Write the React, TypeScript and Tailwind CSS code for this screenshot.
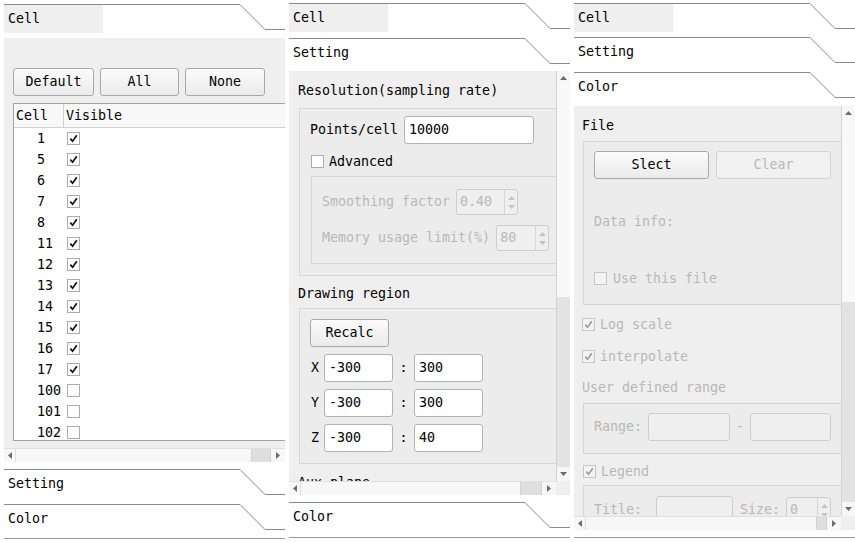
import React from "react";

const font = "font-['DejaVu_Sans_Mono',monospace] text-[13.3px] leading-[16px]";

const Tab = ({ label, active, h }: { label: string; active?: boolean; h: string }) => (
  <div className={`relative shrink-0 ${h}`}>
    <svg className="absolute left-0 top-0" width="281" height="30">
      <polyline points="0,0.5 236,0.5 261,25.5 281,25.5" fill="none" stroke="#8a8a8a" strokeWidth="1" />
    </svg>
    <div className={`relative mt-[1px] flex h-[28px] w-[99px] items-center pl-[4px] ${active ? "bg-[#efefef]" : ""}`}>
      {label}
    </div>
  </div>
);

const Check = ({ checked, disabled }: { checked?: boolean; disabled?: boolean }) => (
  <span
    className={`flex h-[13px] w-[13px] shrink-0 items-center justify-center border ${
      disabled ? "border-[#c6c6c6] bg-[#f3f3f3]" : "border-[#acacac] bg-white"
    }`}
  >
    {checked && (
      <svg width="9" height="9" viewBox="0 0 9 9">
        <path d="M1.3 4.6 L3.6 7.2 L7.8 1.2" fill="none" stroke={disabled ? "#9c9c9c" : "#111"} strokeWidth="1.7" />
      </svg>
    )}
  </span>
);

const Btn = ({ children, w, disabled }: { children: React.ReactNode; w: string; disabled?: boolean }) => (
  <div
    className={`flex h-[28px] shrink-0 items-center justify-center rounded-[3px] border ${w} ${
      disabled
        ? "border-[#d2d2d2] bg-[#f1f1f1] text-[#b8b8b8]"
        : "border-[#a9a9a9] bg-gradient-to-b from-[#fbfbfb] to-[#ebebeb] text-black"
    }`}
  >
    {children}
  </div>
);

const Field = ({ children, w, disabled }: { children?: React.ReactNode; w: string; disabled?: boolean }) => (
  <div
    className={`flex h-[28px] shrink-0 items-center rounded-[3px] border pl-[4px] ${w} ${
      disabled ? "border-[#cdcdcd] bg-[#efefef] text-[#b8b8b8]" : "border-[#b3b3b3] bg-white text-black"
    }`}
  >
    {children}
  </div>
);

const Spin = ({ value, w }: { value: string; w: string }) => (
  <div className={`flex h-[26px] shrink-0 rounded-[3px] border border-[#cdcdcd] bg-[#efefef] text-[#b8b8b8] ${w}`}>
    <span className="flex flex-1 items-center pl-[3px]">{value}</span>
    <span className="flex w-[13px] flex-col items-center justify-center gap-[5px] border-l border-[#d6d6d6]">
      <svg width="7" height="4"><path d="M0 4 L3.5 0 L7 4Z" fill="#c4c4c4" /></svg>
      <svg width="7" height="4"><path d="M0 0 L3.5 4 L7 0Z" fill="#c4c4c4" /></svg>
    </span>
  </div>
);

const HScroll = ({ thumb }: { thumb: string }) => (
  <div className="flex h-[14px] flex-1 border-t border-[#e0e0e0] bg-[#f7f7f7]">
    <div className="flex w-[12px] items-center justify-center border-r border-[#dedede]">
      <svg width="4" height="7"><path d="M4 0 L0 3.5 L4 7Z" fill="#6c6c6c" /></svg>
    </div>
    <div className="flex flex-1 justify-end">
      <div className={`border-x border-[#d2d2d2] bg-[#dfdfdf] ${thumb}`} />
    </div>
    <div className="flex w-[14px] items-center justify-center">
      <svg width="4" height="7"><path d="M0 0 L4 3.5 L0 7Z" fill="#6c6c6c" /></svg>
    </div>
  </div>
);

const VScroll = ({ thumb }: { thumb: string }) => (
  <div className="flex w-[14px] shrink-0 flex-col border-l border-[#d4d4d4]">
    <div className="flex h-[14px] items-center justify-center bg-[#f7f7f7]">
      <svg width="7" height="4"><path d="M0 4 L3.5 0 L7 4Z" fill="#6c6c6c" /></svg>
    </div>
    <div className={`bg-[#f9f9f9] ${thumb}`} />
    <div className="flex-1 bg-[#e3e3e3]" />
    <div className="flex h-[14px] items-center justify-center bg-[#f7f7f7]">
      <svg width="7" height="4"><path d="M0 0 L3.5 4 L7 0Z" fill="#6c6c6c" /></svg>
    </div>
  </div>
);

const Group = ({ children, cls }: { children: React.ReactNode; cls: string }) => (
  <div className={`shrink-0 border border-[#d5d5d5] bg-[#ececec] ${cls}`}>{children}</div>
);

const cells = [1, 5, 6, 7, 8, 11, 12, 13, 14, 15, 16, 17, 100, 101, 102];

const CellPanel = () => (
  <div className="flex h-[424px] flex-col bg-[#efefef]">
    <div className="h-[410px] overflow-hidden pl-[9px] pt-[30px]">
      <div className="flex gap-[6px]">
        <Btn w="w-[81px] h-[27px]">Default</Btn>
        <Btn w="w-[79px] h-[27px]">All</Btn>
        <Btn w="w-[80px] h-[27px]">None</Btn>
      </div>
      <div className="mt-[7px] h-[338px] w-[290px] overflow-hidden border border-r-0 border-[#a3a3a3] bg-white">
        <div className="flex h-[24px] border-b border-[#d0d0d0] bg-[#f8f8f8]">
          <div className="flex w-[50px] items-center border-r border-[#d0d0d0] pl-[2px]">Cell</div>
          <div className="flex items-center pl-[2px]">Visible</div>
        </div>
        {cells.map((c, i) => (
          <div key={c} className="flex h-[21px] items-center">
            <div className="w-[50px] pl-[23px]">{c}</div>
            <div className="pl-[3px]">
              <Check checked={i < 12} />
            </div>
          </div>
        ))}
      </div>
    </div>
    <HScroll thumb="w-[20px]" />
  </div>
);

const SettingPanel = () => (
  <div className="flex h-[424px] flex-col bg-[#efefef]">
    <div className="flex h-[410px]">
      <div className="flex-1 overflow-hidden pl-[9px] pt-[12px]">
        <div>Resolution(sampling rate)</div>
        <Group cls="ml-[1px] mt-[9px] h-[168px] w-[270px] pl-[10px] pt-[7px]">
          <div className="flex items-center gap-[6px]">
            <span>Points/cell</span>
            <Field w="w-[130px]">10000</Field>
          </div>
          <div className="mt-[11px] flex h-[13px] items-center gap-[5px] pl-[1px]">
            <Check />
            <span>Advanced</span>
          </div>
          <Group cls="ml-[1px] mt-[8px] h-[88px] w-[260px] pl-[10px] pt-[12px] text-[#b8b8b8]">
            <div className="flex items-center gap-[6px]">
              <span>Smoothing factor</span>
              <Spin value="0.40" w="w-[62px]" />
            </div>
            <div className="mt-[10px] flex items-center gap-[6px]">
              <span>Memory usage limit(%)</span>
              <Spin value="80" w="w-[53px]" />
            </div>
          </Group>
        </Group>
        <div className="mt-[10px]">Drawing region</div>
        <Group cls="ml-[1px] mt-[6px] h-[156px] w-[270px] pl-[10px] pt-[10px]">
          <Btn w="w-[79px]">Recalc</Btn>
          {[
            ["X", "300"],
            ["Y", "300"],
            ["Z", "40"],
          ].map(([axis, max]) => (
            <div key={axis} className="mt-[7px] flex items-center">
              <span className="w-[14px] pl-[1px]">{axis}</span>
              <Field w="w-[69px]">-300</Field>
              <span className="w-[21px] text-center">:</span>
              <Field w="w-[69px]">{max}</Field>
            </div>
          ))}
        </Group>
        <div className="mt-[11px]">Aux plane</div>
      </div>
      <VScroll thumb="h-[212px]" />
    </div>
    <div className="flex h-[14px]">
      <HScroll thumb="w-[22px]" />
      <div className="w-[14px] bg-[#efefef]" />
    </div>
  </div>
);

const ColorPanel = () => (
  <div className="flex h-[424px] flex-col bg-[#efefef]">
    <div className="flex h-[410px]">
      <div className="flex-1 overflow-hidden pl-[8px] pt-[12px]">
        <div>File</div>
        <Group cls="ml-[1px] mt-[7px] h-[164px] w-[270px] pl-[10px] pt-[9px]">
          <div className="flex gap-[7px]">
            <Btn w="w-[115px]">Slect</Btn>
            <Btn w="w-[115px]" disabled>
              Clear
            </Btn>
          </div>
          <div className="mt-[35px] text-[#b8b8b8]">Data info:</div>
          <div className="mt-[42px] flex h-[13px] items-center gap-[6px] text-[#b8b8b8]">
            <Check disabled />
            <span>Use this file</span>
          </div>
        </Group>
        <div className="mt-[13px] flex h-[13px] items-center gap-[5px] text-[#b8b8b8]">
          <Check checked disabled />
          <span>Log scale</span>
        </div>
        <div className="mt-[19px] flex h-[13px] items-center gap-[5px] text-[#b8b8b8]">
          <Check checked disabled />
          <span>interpolate</span>
        </div>
        <div className="mt-[17px] text-[#b8b8b8]">User defined range</div>
        <Group cls="ml-[1px] mt-[7px] h-[51px] w-[270px] pl-[10px] pt-[9px] text-[#b8b8b8]">
          <div className="flex items-center gap-[6px]">
            <span>Range:</span>
            <Field w="w-[82px]" disabled />
            <span className="w-[8px] text-center">-</span>
            <Field w="w-[81px]" disabled />
          </div>
        </Group>
        <div className="ml-[1px] mt-[11px] flex h-[13px] items-center gap-[5px] text-[#b8b8b8]">
          <Check checked disabled />
          <span>Legend</span>
        </div>
        <Group cls="ml-[1px] mt-[7px] h-[60px] w-[270px] pl-[10px] pt-[10px] text-[#b8b8b8]">
          <div className="flex items-center">
            <span className="w-[62px]">Title:</span>
            <Field w="w-[77px]" disabled />
            <span className="ml-[7px] w-[46px]">Size:</span>
            <Spin value="0" w="w-[45px]" />
          </div>
        </Group>
      </div>
      <VScroll thumb="h-[182px]" />
    </div>
    <div className="flex h-[14px]">
      <HScroll thumb="w-[11px]" />
      <div className="w-[14px] bg-[#efefef]" />
    </div>
  </div>
);

const BottomLine = () => <div className="h-px bg-[#9a9a9a]" />;

export default function App() {
  return (
    <div className={`flex h-[542px] w-[855px] overflow-hidden bg-white text-black ${font}`}>
      <div className="flex w-[285px] shrink-0 flex-col pl-[4px] pt-[4px]">
        <Tab label="Cell" active h="h-[34px]" />
        <CellPanel />
        <div className="h-[7px]" />
        <Tab label="Setting" h="h-[35px]" />
        <Tab label="Color" h="h-[34px]" />
        <BottomLine />
      </div>
      <div className="flex w-[285px] shrink-0 flex-col pl-[4px] pt-[3px]">
        <Tab label="Cell" active h="h-[35px]" />
        <Tab label="Setting" h="h-[33px]" />
        <SettingPanel />
        <div className="h-[7px]" />
        <Tab label="Color" h="h-[35px]" />
        <BottomLine />
      </div>
      <div className="flex w-[285px] shrink-0 flex-col pl-[4px] pt-[3px]">
        <Tab label="Cell" active h="h-[34px]" />
        <Tab label="Setting" h="h-[35px]" />
        <Tab label="Color" h="h-[34px]" />
        <ColorPanel />
        <div className="h-[7px]" />
        <BottomLine />
      </div>
    </div>
  );
}
